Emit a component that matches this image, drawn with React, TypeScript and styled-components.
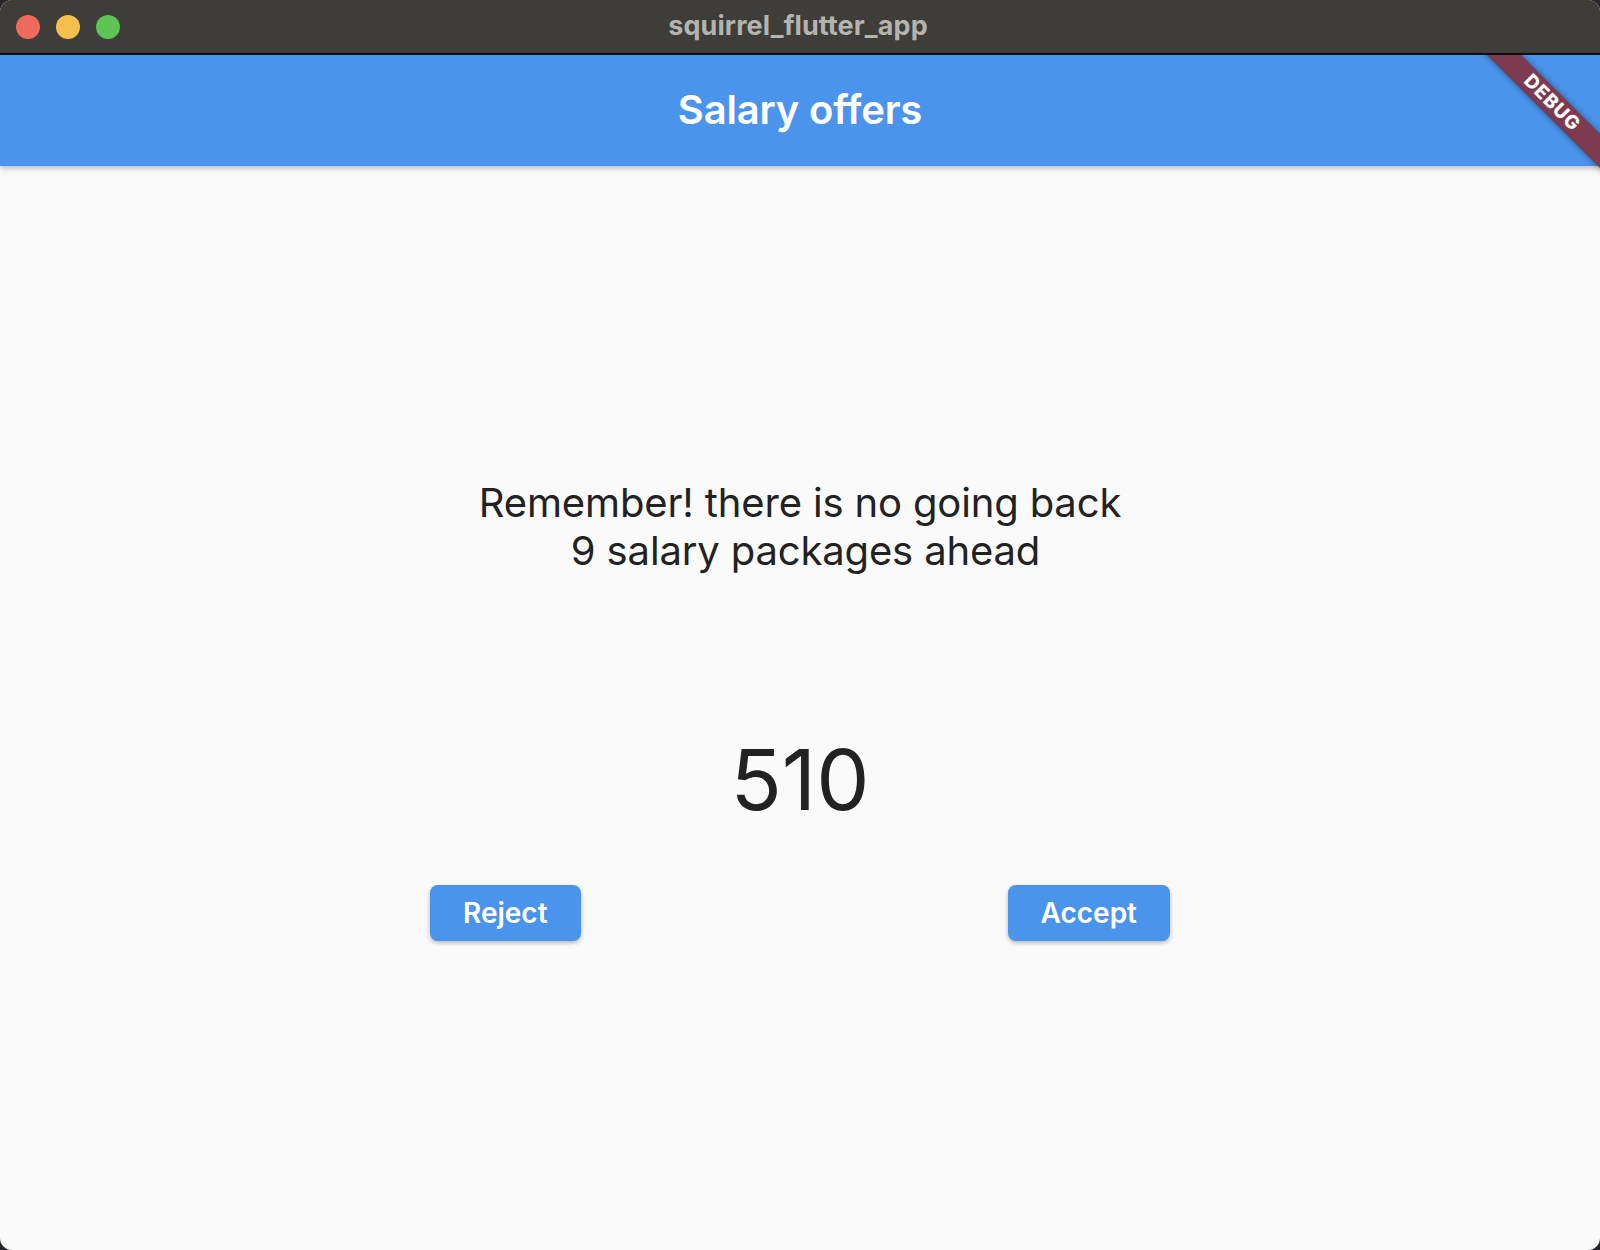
import React from "react";
import styled, { createGlobalStyle } from "styled-components";

const GlobalStyle = createGlobalStyle`
  html, body {
    margin: 0;
    padding: 0;
    background: #26262a;
  }
  #root {
    width: 1600px;
    height: 1250px;
  }
  * {
    box-sizing: border-box;
  }
`;

const Window = styled.div`
  width: 1600px;
  height: 1250px;
  border-radius: 12px;
  overflow: hidden;
  display: flex;
  flex-direction: column;
  background: #fafafa;
  font-family: Inter, "Open Sans", "Liberation Sans", sans-serif;
`;

const TitleBar = styled.div`
  height: 55px;
  flex: 0 0 55px;
  background: #3e3d39;
  border-bottom: 2px solid #0c0c0c;
  display: grid;
  grid-template-columns: 1fr auto 1fr;
  align-items: center;
`;

const Lights = styled.div`
  display: flex;
  gap: 16px;
  padding-left: 16px;
  padding-top: 1px;
`;

const Light = styled.span<{ $color: string }>`
  width: 24px;
  height: 24px;
  border-radius: 50%;
  background: ${(p) => p.$color};
`;

const WindowTitle = styled.div`
  font-size: 27px;
  font-weight: 700;
  color: #b4b4ae;
  letter-spacing: 0.1px;
  padding-bottom: 3px;
  margin-left: -4px;
`;

const Content = styled.div`
  flex: 1;
  position: relative;
  overflow: hidden;
  display: flex;
  flex-direction: column;
`;

const AppBar = styled.header`
  height: 111px;
  flex: 0 0 111px;
  background: #4a94ec;
  display: flex;
  align-items: center;
  justify-content: center;
  box-shadow: 0 2px 6px rgba(0, 0, 0, 0.28);
  position: relative;
  z-index: 1;
`;

const AppTitle = styled.h1`
  margin: 0;
  font-size: 40px;
  font-weight: 600;
  color: #ffffff;
  letter-spacing: -0.2px;
  padding-bottom: 2px;
`;

const Body = styled.main`
  flex: 1;
  display: flex;
  flex-direction: column;
  align-items: center;
  justify-content: flex-start;
  padding-top: 313px;
  color: #222222;
`;

const Message = styled.p`
  margin: 0;
  font-size: 40px;
  line-height: 48px;
  font-weight: 400;
  text-align: center;
  letter-spacing: -0.15px;
  white-space: pre;
`;

const Amount = styled.div`
  margin-top: 162px;
  font-size: 84.5px;
  line-height: 84.5px;
  font-weight: 400;
`;

const Actions = styled.div`
  margin-top: 63px;
  width: 740px;
  display: flex;
  justify-content: space-between;
`;

const ActionButton = styled.button`
  height: 56px;
  padding: 0 33px;
  border: none;
  border-radius: 8px;
  background: #4a94ec;
  color: #ffffff;
  font-family: inherit;
  font-size: 28px;
  font-weight: 600;
  box-shadow: 0 2px 4px rgba(0, 0, 0, 0.28);
  cursor: pointer;
`;

const Banner = styled.div`
  position: absolute;
  top: 48px;
  right: 48px;
  width: 220px;
  height: 24px;
  transform: translate(50%, -50%) rotate(45deg);
  background: #7c3b51;
  color: #ffffff;
  font-size: 19px;
  font-weight: 800;
  letter-spacing: 1px;
  line-height: 24px;
  text-align: center;
  box-shadow: 0 0 6px rgba(0, 0, 0, 0.45);
  z-index: 2;
`;

export default function App() {
  return (
    <>
      <GlobalStyle />
      <Window>
        <TitleBar>
          <Lights>
            <Light $color="#ee6a5f" />
            <Light $color="#f5bf4f" />
            <Light $color="#5fc454" />
          </Lights>
          <WindowTitle>squirrel_flutter_app</WindowTitle>
          <div />
        </TitleBar>
        <Content>
          <AppBar>
            <AppTitle>Salary offers</AppTitle>
          </AppBar>
          <Body>
            <Message>{"Remember! there is no going back\n 9 salary packages ahead"}</Message>
            <Amount>510</Amount>
            <Actions>
              <ActionButton>Reject</ActionButton>
              <ActionButton>Accept</ActionButton>
            </Actions>
          </Body>
          <Banner>DEBUG</Banner>
        </Content>
      </Window>
    </>
  );
}
